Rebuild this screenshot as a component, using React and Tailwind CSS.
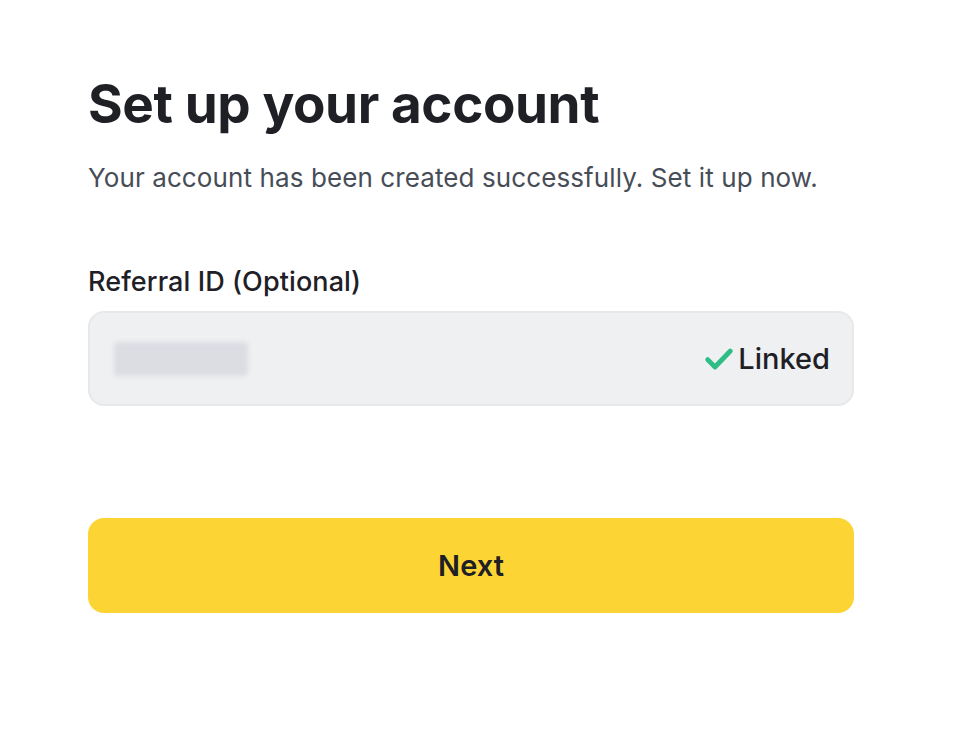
import React from "react";

export default function App() {
  return (
    <div className="min-h-[731px] w-[958px] bg-white" style={{ fontFamily: "Inter, 'Noto Sans', sans-serif" }}>
      <div className="ml-[88px] w-[766px] pt-[72px]">
        <h1 className="text-[53px] font-bold leading-[64px] tracking-[-0.4px] text-[#1e2026]">Set up your account</h1>
        <p className="mt-[24px] text-[26px] leading-[36px] tracking-[0.1px] text-[#474d57]">Your account has been created successfully. Set it up now.</p>
        <div className="mt-[70px] text-[27px] font-medium leading-[32px] tracking-[0.1px] text-[#1e2026]">Referral ID (Optional)</div>
        <div className="mt-[13px] flex h-[95px] items-center justify-between rounded-[16px] border-2 border-[#e6e8ea] bg-[#eff0f1] pl-[24px] pr-[22px]">
          <div className="h-[34px] w-[134px] rounded-[4px] bg-[#dcdde3] blur-[2px]" />
          <div className="flex items-center gap-[3px]">
            <svg width="32" height="32" viewBox="0 0 24 24" fill="none">
              <path d="M3.5 12.5l5.5 5.5 11.5-12" stroke="#2ebd85" strokeWidth="3.6" strokeLinecap="round" strokeLinejoin="round" />
            </svg>
            <span className="text-[29px] font-medium text-[#1e2026]">Linked</span>
          </div>
        </div>
        <button className="mt-[112px] flex h-[95px] w-full items-center justify-center rounded-[16px] bg-[#fcd535] text-[29px] font-semibold text-[#1e2026]">
          Next
        </button>
      </div>
    </div>
  );
}
